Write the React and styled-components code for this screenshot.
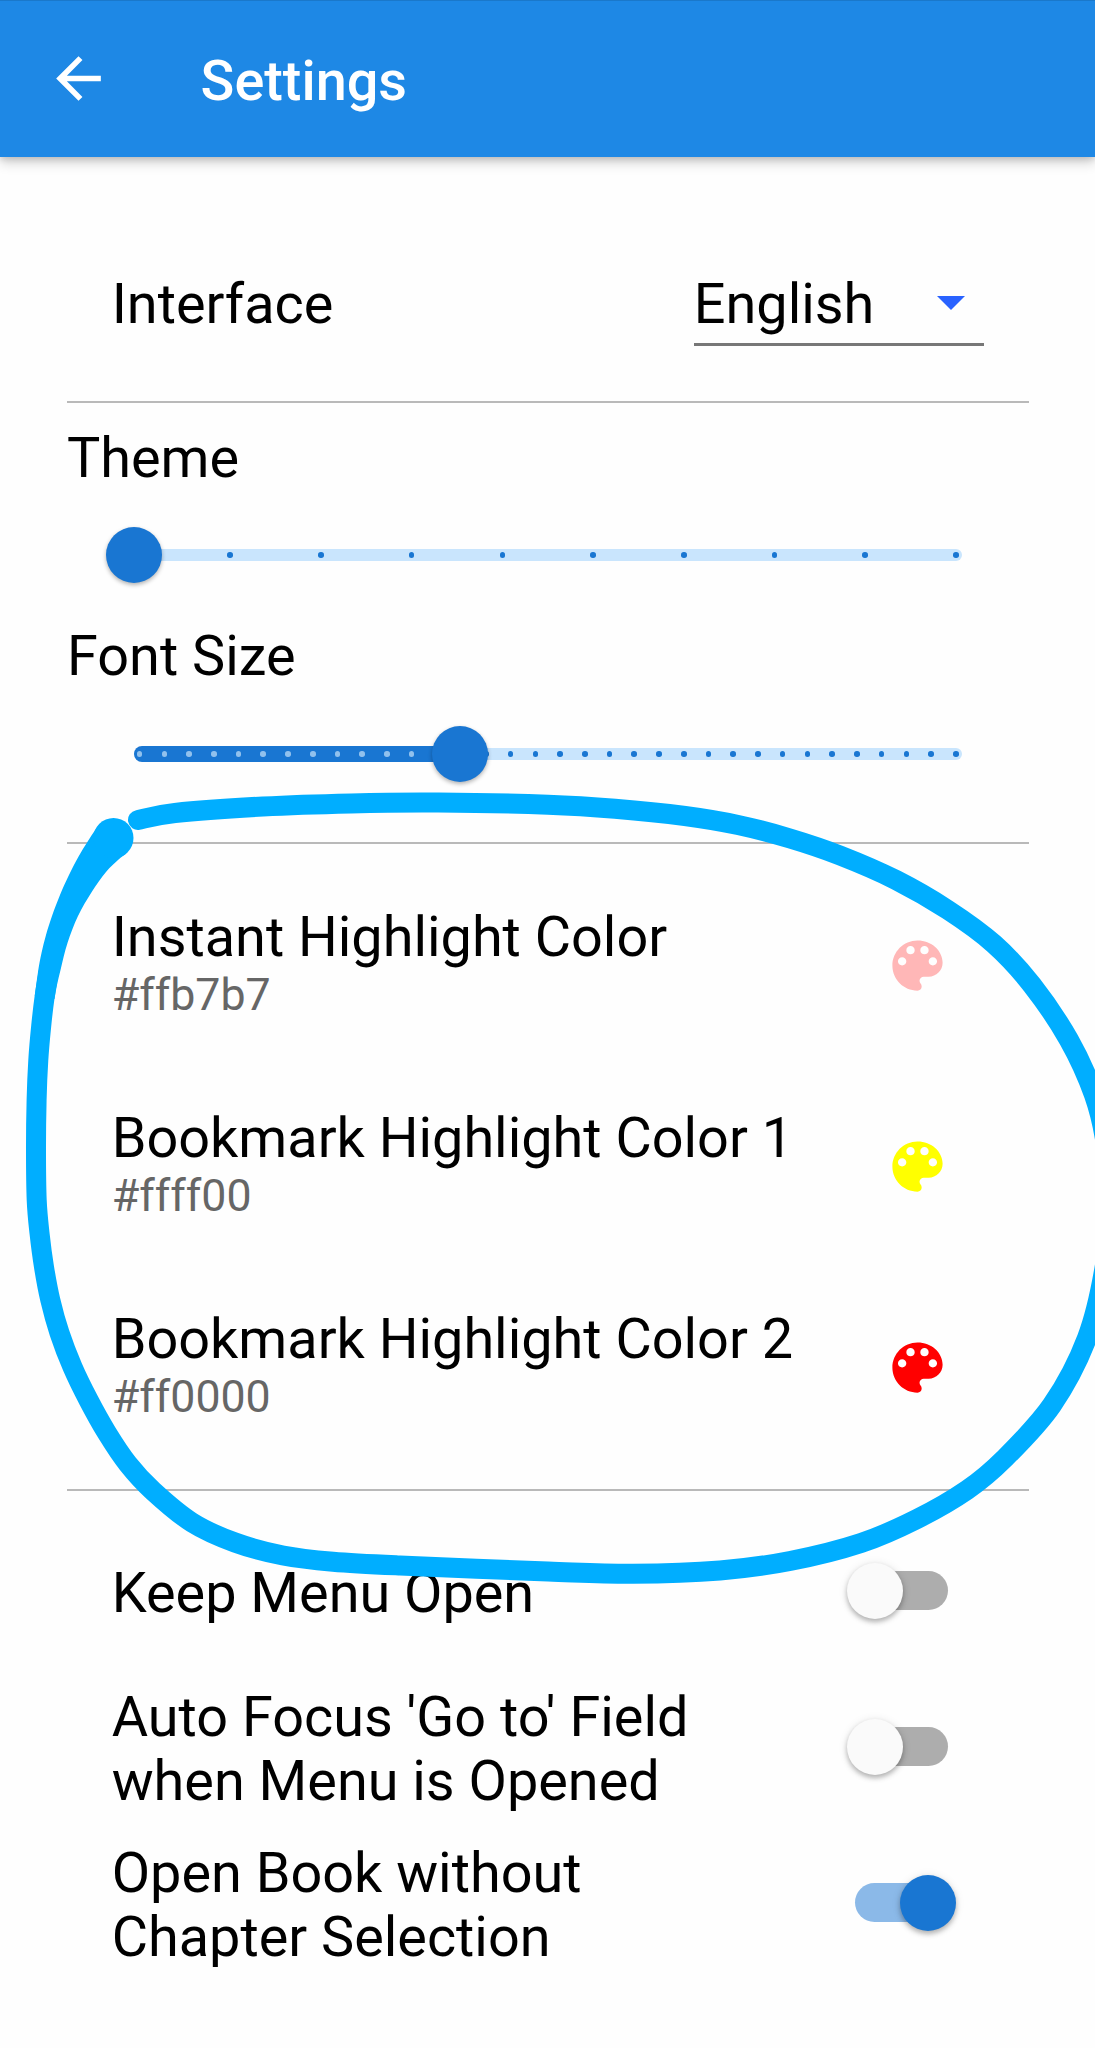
import React from "react";
import styled, { createGlobalStyle } from "styled-components";

const GlobalStyle = createGlobalStyle`
  * { box-sizing: border-box; }
  html, body { margin: 0; padding: 0; background: #fefefe; }
  body { font-family: Roboto, "Liberation Sans", sans-serif; color: #000; }
`;

const Screen = styled.div`
  position: relative;
  width: 1095px;
  height: 2048px;
  overflow: hidden;
  background: #fefefe;
`;

const AppBar = styled.header`
  display: flex;
  align-items: center;
  height: 156.6px;
  padding-left: 44.6px;
  background: #1e88e5;
  border-top: 1px solid #1a78ca;
  box-shadow: 0 5px 12px rgba(0, 0, 0, 0.2), 0 2px 6px rgba(0, 0, 0, 0.12);
`;

const BackIcon = styled.svg`
  width: 67px;
  height: 67px;
  fill: #fff;
`;

const Title = styled.h1`
  margin: 0 0 0 89px;
  padding-top: 5px;
  font-size: 55.8px;
  line-height: 64px;
  font-weight: 500;
  color: #fff;
`;

const Content = styled.main`
  display: flex;
  flex-direction: column;
  padding: 44.4px 66.5px 0 67px;
`;

const Divider = styled.hr`
  width: 100%;
  height: 2px;
  margin: ${(p) => p.$above || 0}px 0 ${(p) => p.$below || 0}px;
  border: 0;
  background: #b9b9b9;
`;

const Row = styled.div`
  display: flex;
  align-items: center;
  justify-content: space-between;
  height: ${(p) => p.$height}px;
  padding: 0 ${(p) => p.$end}px 0 44.7px;
`;

const Label = styled.div`
  padding-top: ${(p) => p.$drop || 0}px;
  font-size: 55.8px;
  line-height: 64px;
  white-space: pre-line;
`;

const Select = styled.div`
  display: flex;
  align-items: center;
  justify-content: space-between;
  width: 290px;
  margin-top: 17px;
  padding: 0 19px 7px 0;
  border-bottom: 3px solid #777;
  font-size: 55.8px;
  line-height: 64px;
`;

const Caret = styled.svg`
  width: 28px;
  height: 14px;
  margin-bottom: 2px;
  fill: #2962ff;
`;

const SliderBox = styled.div`
  display: flex;
  align-items: center;
  height: ${(p) => p.$height}px;
  padding: 0 67px;
`;

const Track = styled.div`
  position: relative;
  display: flex;
  align-items: center;
  justify-content: space-between;
  width: 100%;
  height: 11.2px;
  padding: 0 2.8px;
  border-radius: 6px;
  background: #c9e5fd;
`;

const ActiveTrack = styled.div`
  position: absolute;
  left: 0;
  height: 16.8px;
  border-radius: 8.4px 0 0 8.4px;
  background: #1976d2;
`;

const Tick = styled.i`
  position: relative;
  width: 5.6px;
  height: 5.6px;
  border-radius: 50%;
  background: ${(p) => (p.$active ? "#91c1ed" : "#1976d2")};
`;

const Thumb = styled.div`
  position: absolute;
  width: 56px;
  height: 56px;
  margin-left: -28px;
  border-radius: 50%;
  background: #1976d2;
  box-shadow: 0 2px 4px rgba(0, 0, 0, 0.3);
`;

const ColorText = styled.div`
  padding-bottom: 5px;
`;

const ColorCode = styled.div`
  font-size: 44.7px;
  line-height: 52px;
  color: #666;
`;

const PaletteIcon = styled.svg`
  width: 67px;
  height: 67px;
  fill: ${(p) => p.$color};
`;

const SwitchTrack = styled.div`
  display: flex;
  align-items: center;
  justify-content: ${(p) => (p.$on ? "flex-end" : "flex-start")};
  width: 92.4px;
  height: 39px;
  border-radius: 20px;
  background: ${(p) => (p.$on ? "#8bb9e8" : "#adadad")};
`;

const Knob = styled.div`
  flex: none;
  width: 56px;
  height: 56px;
  margin: 0 -8.4px;
  border-radius: 50%;
  background: ${(p) => (p.$on ? "#1976d2" : "#fafafa")};
  box-shadow: 0 3px 5px rgba(0, 0, 0, 0.26), 0 1px 10px rgba(0, 0, 0, 0.1);
`;

const Ink = styled.svg`
  position: absolute;
  left: 0;
  top: 0;
  pointer-events: none;
`;

const PALETTE =
  "M12 3c-4.97 0-9 4.03-9 9s4.03 9 9 9c.83 0 1.5-.67 1.5-1.5 0-.39-.15-.74-.39-1.01-.23-.26-.38-.61-.38-.99 0-.83.67-1.5 1.5-1.5H16c2.76 0 5-2.24 5-5 0-4.42-4.03-8-9-8zm-5.5 9c-.83 0-1.5-.67-1.5-1.5S5.67 9 6.5 9 8 9.67 8 10.5 7.33 12 6.5 12zm3-4C8.67 8 8 7.33 8 6.5S8.67 5 9.5 5s1.5.67 1.5 1.5S10.33 8 9.5 8zm5 0c-.83 0-1.5-.67-1.5-1.5S13.67 5 14.5 5s1.5.67 1.5 1.5S15.33 8 14.5 8zm3 4c-.83 0-1.5-.67-1.5-1.5S16.67 9 17.5 9s1.5.67 1.5 1.5-.67 1.5-1.5 1.5z";

const COLORS = [
  { name: "Instant Highlight Color", code: "#ffb7b7" },
  { name: "Bookmark Highlight Color 1", code: "#ffff00" },
  { name: "Bookmark Highlight Color 2", code: "#ff0000" },
];

const SWITCHES = [
  { name: "Keep Menu Open", on: false },
  { name: "Auto Focus 'Go to' Field\nwhen Menu is Opened", on: false },
  { name: "Open Book without\nChapter Selection", on: true },
];

// Pen stroke, clockwise from its first touch at the top left.
const STROKE = [
  [138, 820], [175, 813], [263, 806.5], [351, 803.4], [438, 802.6], [548, 804.7],
  [615, 808.7], [685, 816], [738, 825], [790, 838.5], [840, 855.5], [896, 880],
  [948, 910], [994, 944], [1032, 985], [1069, 1040], [1094, 1095], [1106, 1145],
  [1110, 1200], [1105, 1265], [1087, 1338], [1052, 1405], [1004, 1459],
  [967, 1490], [917, 1519], [861, 1543], [790, 1561], [720, 1570.5],
  [633, 1573.8], [548, 1571.5], [400, 1565.5], [333, 1561.7], [283, 1555.5],
  [235, 1542.5], [192, 1522.5], [153, 1491], [128, 1464], [107, 1433],
  [88.5, 1400], [72.5, 1367], [59.5, 1333], [50.3, 1300], [44, 1267],
  [39.5, 1233], [36.7, 1200], [36, 1150], [36.6, 1100], [38.3, 1060],
  [41.2, 1026], [44.6, 997], [49.5, 967],
];

// The pen lingers at the end of the stroke, so it widens into a blob.
const STROKE_END = {
  outer: [[96.5, 828], [88, 841], [78.3, 857], [68.5, 876], [60, 895], [52, 916], [46, 935], [41.5, 953], [38, 972], [34.8, 996]],
  inner: [[54.5, 999], [57, 985], [61, 968], [67.5, 943], [78, 916], [91.7, 892], [106, 872], [118, 860], [126.5, 853.5]],
};

function smooth(points, command = "M") {
  let d = `${command}${points[0]}`;
  for (let i = 0; i < points.length - 1; i += 1) {
    const a = points[i - 1] || points[i];
    const b = points[i];
    const c = points[i + 1];
    const e = points[i + 2] || c;
    d += `C${b[0] + (c[0] - a[0]) / 6},${b[1] + (c[1] - a[1]) / 6} ${c[0] - (e[0] - b[0]) / 6},${c[1] - (e[1] - b[1]) / 6} ${c}`;
  }
  return d;
}

function Slider({ steps, value, height }) {
  const left = `${(value / steps) * 100}%`;
  return (
    <SliderBox $height={height}>
      <Track>
        {value > 0 && <ActiveTrack style={{ width: left }} />}
        {Array.from({ length: steps + 1 }, (_, i) => (
          <Tick key={i} $active={i <= value} />
        ))}
        <Thumb style={{ left }} />
      </Track>
    </SliderBox>
  );
}

export default function App() {
  return (
    <Screen>
      <GlobalStyle />
      <AppBar>
        <BackIcon viewBox="0 0 24 24">
          <path d="M20 11H7.83l5.59-5.59L12 4l-8 8 8 8 1.41-1.41L7.83 13H20v-2z" />
        </BackIcon>
        <Title>Settings</Title>
      </AppBar>
      <Content>
        <Row $height={200} $end={44.7}>
          <Label $drop={7}>Interface</Label>
          <Select>
            English
            <Caret viewBox="0 0 28 14">
              <path d="M0 0h28L14 14z" />
            </Caret>
          </Select>
        </Row>
        <Divider $below={23} />
        <Label>Theme</Label>
        <Slider steps={9} value={0} height={130} />
        <Label $drop={4}>Font Size</Label>
        <Slider steps={33} value={13} height={132} />
        <Divider $above={22} $below={21} />
        {COLORS.map((c) => (
          <Row key={c.name} $height={201} $end={78}>
            <ColorText>
              <Label>{c.name}</Label>
              <ColorCode>{c.code}</ColorCode>
            </ColorText>
            <PaletteIcon viewBox="0 0 24 24" $color={c.code}>
              <path d={PALETTE} />
            </PaletteIcon>
          </Row>
        ))}
        <Divider $above={21} $below={22} />
        {SWITCHES.map((s) => (
          <Row key={s.name} $height={156} $end={80.8}>
            <Label $drop={4.5}>{s.name}</Label>
            <SwitchTrack $on={s.on}>
              <Knob $on={s.on} />
            </SwitchTrack>
          </Row>
        ))}
      </Content>
      <Ink width="1095" height="2048" viewBox="0 0 1095 2048">
        <path
          d={smooth(STROKE)}
          fill="none"
          stroke="#00aeff"
          strokeWidth="20"
          strokeLinecap="round"
          strokeLinejoin="round"
        />
        <path
          d={`${smooth(STROKE_END.outer)}${smooth(STROKE_END.inner, "L")}Z`}
          fill="#00aeff"
        />
        <circle cx="113.5" cy="838" r="20" fill="#00aeff" />
      </Ink>
    </Screen>
  );
}
